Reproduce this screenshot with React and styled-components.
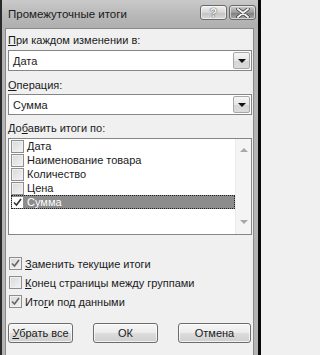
import React from "react";
import styled, { createGlobalStyle } from "styled-components";

const Global = createGlobalStyle`
  html, body { margin: 0; padding: 0; background: #f0f0f0; }
  body { font-family: "Liberation Sans", Arial, sans-serif; }
  * { box-sizing: border-box; }
`;

const Window = styled.div`
  width: 261px;
  height: 355px;
  display: flex;
  flex-direction: column;
  background: #b4b4b4;
  border-left: 2px solid #2a2a2a;
  border-right: 3px solid #0a0a0a;
  overflow: hidden;
`;

const TitleBar = styled.div`
  height: 28px;
  flex: none;
  display: flex;
  align-items: flex-start;
  padding: 5px 2px 0 6px;
  background: linear-gradient(#cacaca, #b6b6b6 60%, #b0b0b0);
`;

const Title = styled.div`
  flex: 1;
  font-size: 11.5px;
  line-height: 16px;
  color: #1a1a1a;
  margin-top: 1px;
`;

const CapButton = styled.div`
  width: ${(p) => p.$w}px;
  height: 15px;
  margin-left: ${(p) => p.$ml}px;
  border: 1px solid #6a6a6a;
  border-radius: 3px;
  display: flex;
  align-items: center;
  justify-content: center;
  background: ${(p) =>
    p.$dark
      ? "linear-gradient(#d0d0d0, #9a9a9a 50%, #7c7c7c 51%, #a8a8a8)"
      : "linear-gradient(#f0f0f0, #d6d6d6 50%, #c2c2c2 51%, #d8d8d8)"};
  box-shadow: inset 0 0 0 1px rgba(255, 255, 255, 0.55);
`;

const Frame = styled.div`
  flex: 1;
  display: flex;
  padding: 0 4px 0 3px;
`;

const Body = styled.div`
  flex: 1;
  background: #f0f0f0;
  border-left: 1px solid #8a8a8a;
  border-right: 1px solid #8a8a8a;
  border-top: 1px solid #8a8a8a;
  display: flex;
  flex-direction: column;
  padding: 0 1px 0 2px;
`;

const Label = styled.div`
  font-size: 11px;
  line-height: 14px;
  color: #1a1a1a;
  margin-top: ${(p) => p.$mt}px;
  white-space: nowrap;
`;

const U = styled.span`
  text-decoration: underline;
  text-underline-offset: 1px;
`;

const Combo = styled.div`
  height: 21px;
  margin-top: ${(p) => p.$mt}px;
  border: 1px solid #858585;
  background: #fff;
  display: flex;
  align-items: center;
  padding: 0 1px 0 4px;
  font-size: 11px;
  color: #1a1a1a;
`;

const ComboText = styled.span`
  flex: 1;
`;

const DropButton = styled.div`
  width: 17px;
  height: 17px;
  border: 1px solid #a8a8a8;
  border-radius: 2px;
  background: linear-gradient(#f6f6f6, #e6e6e6 50%, #d4d4d4 51%, #dcdcdc);
  display: flex;
  align-items: center;
  justify-content: center;
`;

const Arrow = styled.div`
  width: 0;
  height: 0;
  border-left: 4px solid transparent;
  border-right: 4px solid transparent;
  border-${(p) => (p.$up ? "bottom" : "top")}: 4px solid ${(p) => p.$color};
`;

const ListBox = styled.div`
  height: 97px;
  margin-top: 3px;
  border: 1px solid #858585;
  background: #fff;
  display: flex;
`;

const ListItems = styled.div`
  flex: 1;
  padding: 0 0 0 2px;
`;

const ListRow = styled.div`
  height: 14px;
  display: flex;
  align-items: center;
  font-size: 11px;
  color: ${(p) => (p.$sel ? "#fff" : "#1a1a1a")};
  background: ${(p) => (p.$sel ? "#8c8c8c" : "transparent")};
  outline: ${(p) => (p.$sel ? "1px dotted #222" : "none")};
  outline-offset: -1px;
  gap: 3px;
  white-space: nowrap;
`;

const Scrollbar = styled.div`
  width: 16px;
  background: #f4f4f4;
  border-left: 1px solid #ececec;
  display: flex;
  flex-direction: column;
  justify-content: space-between;
  align-items: center;
  padding: 9px 0 10px;
`;

const Box = styled.div`
  width: 13px;
  height: 13px;
  flex: none;
  border: 1px solid #8e8e8e;
  background: ${(p) =>
    p.$white ? "#fff" : "linear-gradient(135deg, #d8d8d8, #f4f4f4)"};
  box-shadow: inset 0 0 0 1px ${(p) => (p.$white ? "#fff" : "#f0f0f0")};
  display: flex;
  align-items: center;
  justify-content: center;
`;

const Options = styled.div`
  margin-top: 19px;
  display: flex;
  flex-direction: column;
`;

const OptionRow = styled.div`
  height: 19px;
  display: flex;
  align-items: center;
  gap: 3px;
  padding-left: 1px;
  font-size: 11px;
  color: #1a1a1a;
  white-space: nowrap;
`;

const Buttons = styled.div`
  margin-top: 12px;
  display: flex;
  justify-content: space-between;
  padding-right: 1px;
`;

const Button = styled.div`
  width: ${(p) => p.$w}px;
  height: 20px;
  border: 1px solid #6c6c6c;
  border-radius: 3px;
  background: linear-gradient(#f6f6f6, #ebebeb 50%, #dddddd 51%, #cfcfcf);
  box-shadow: inset 0 0 0 1px rgba(255, 255, 255, 0.7);
  display: flex;
  align-items: center;
  justify-content: center;
  font-size: 11px;
  color: #1a1a1a;
`;

const Check = ({ color = "#444" }) => (
  <svg width="9" height="9" viewBox="0 0 9 9">
    <path d="M1 4.5 L3.5 7 L8 1" fill="none" stroke={color} strokeWidth="1.6" />
  </svg>
);

const Glyph = ({ type }) =>
  type === "help" ? (
    <span
      style={{
        fontFamily: "'Liberation Sans', sans-serif",
        fontWeight: 700,
        fontSize: 13,
        lineHeight: "13px",
        color: "#f4f4f4",
        textShadow: "0 0 1px #444, 0 0 1px #444",
      }}
    >
      ?
    </span>
  ) : (
    <svg width="14" height="10" viewBox="0 0 14 10">
      <path d="M2 1 L12 9 M12 1 L2 9" stroke="#333" strokeWidth="3.4" strokeLinecap="round" />
      <path d="M2 1 L12 9 M12 1 L2 9" stroke="#f4f4f4" strokeWidth="2" strokeLinecap="round" />
    </svg>
  );

const items = ["Дата", "Наименование товара", "Количество", "Цена", "Сумма"];

export default function App() {
  return (
    <>
      <Global />
      <Window>
        <TitleBar>
          <Title>Промежуточные итоги</Title>
          <CapButton $w={27} $ml={0}>
            <Glyph type="help" />
          </CapButton>
          <CapButton $w={27} $ml={2} $dark>
            <Glyph type="close" />
          </CapButton>
        </TitleBar>
        <Frame>
          <Body>
            <Label $mt={4}>
              <U>П</U>ри каждом изменении в:
            </Label>
            <Combo $mt={3}>
              <ComboText>Дата</ComboText>
              <DropButton>
                <Arrow $color="#111" />
              </DropButton>
            </Combo>
            <Label $mt={7}>
              <U>О</U>перация:
            </Label>
            <Combo $mt={2}>
              <ComboText>Сумма</ComboText>
              <DropButton>
                <Arrow $color="#111" />
              </DropButton>
            </Combo>
            <Label $mt={6}>
              До<U>б</U>авить итоги по:
            </Label>
            <ListBox>
              <ListItems>
                {items.map((t, i) => {
                  const sel = i === items.length - 1;
                  return (
                    <ListRow key={t} $sel={sel}>
                      <Box $white={sel}>{sel && <Check color="#333" />}</Box>
                      {t}
                    </ListRow>
                  );
                })}
              </ListItems>
              <Scrollbar>
                <Arrow $up $color="#a8a8a8" />
                <Arrow $color="#a8a8a8" />
              </Scrollbar>
            </ListBox>
            <Options>
              <OptionRow>
                <Box>
                  <Check color="#666" />
                </Box>
                <span>
                  <U>З</U>аменить текущие итоги
                </span>
              </OptionRow>
              <OptionRow>
                <Box />
                <span>
                  <U>К</U>онец страницы между группами
                </span>
              </OptionRow>
              <OptionRow>
                <Box>
                  <Check color="#666" />
                </Box>
                <span>
                  Ито<U>г</U>и под данными
                </span>
              </OptionRow>
            </Options>
            <Buttons>
              <Button $w={65}>
                <span>
                  <U>У</U>брать все
                </span>
              </Button>
              <Button $w={65}>ОК</Button>
              <Button $w={73}>Отмена</Button>
            </Buttons>
          </Body>
        </Frame>
      </Window>
    </>
  );
}
